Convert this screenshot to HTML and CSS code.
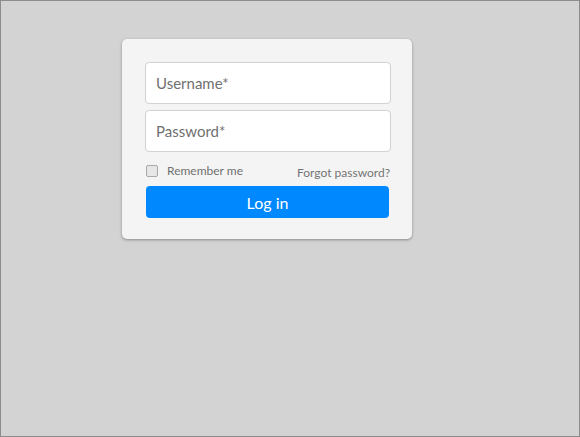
FILE: index.html
```html
<!DOCTYPE html>
<html>
<head>
<meta charset="utf-8">
<link rel="stylesheet" href="styles.css">
</head>
<body>
<div class="page">
  <form class="card">
    <input class="field" type="text" placeholder="Username*">
    <input class="field" type="password" placeholder="Password*">
    <div class="options">
      <label class="remember"><span class="box"></span>Remember me</label>
      <a class="forgot">Forgot password?</a>
    </div>
    <button class="login" type="button">Log in</button>
  </form>
</div>
</body>
</html>
```
FILE: styles.css
```css
html, body {
  margin: 0;
  padding: 0;
}
body {
  font-family: Lato, "Open Sans", sans-serif;
}
.page {
  box-sizing: border-box;
  width: 580px;
  height: 437px;
  border: 1px solid #8c8c8c;
  background: #d3d3d3;
  padding: 38px 0 0 121px;
}
.card {
  box-sizing: border-box;
  width: 290px;
  height: 200px;
  background: #f4f4f4;
  border-radius: 5px;
  box-shadow: 0 1px 3px rgba(0,0,0,0.35);
  padding: 23px 21px 0 23px;
  display: flex;
  flex-direction: column;
}
.field {
  box-sizing: border-box;
  width: 246px;
  height: 42px;
  border: 1px solid #d2d2d2;
  border-radius: 4px;
  background: #fff;
  padding: 0 10px;
  font-family: Lato, sans-serif;
  font-size: 15px;
  color: #555;
  margin: 0 0 6px 0;
  outline: none;
}
.field::placeholder {
  color: #707070;
}
.options {
  display: flex;
  justify-content: space-between;
  align-items: flex-end;
  margin-top: 5px;
  height: 17px;
  padding-left: 1px;
}
.remember {
  display: flex;
  align-items: center;
  font-size: 12px;
  color: #707070;
  align-self: flex-start;
}
.box {
  box-sizing: border-box;
  width: 12px;
  height: 12px;
  border: 1px solid #a8a8a8;
  border-radius: 2px;
  background: #e6e6e6;
  margin-right: 9px;
}
.forgot {
  font-size: 12px;
  color: #757575;
  line-height: 14px;
  margin-right: 1px;
}
.login {
  box-sizing: border-box;
  width: 243px;
  height: 32px;
  margin: 6px 0 0 1px;
  border: none;
  border-radius: 4px;
  background: #0088ff;
  color: #fff;
  font-family: Lato, sans-serif;
  font-size: 16px;
  padding: 0;
}
```
